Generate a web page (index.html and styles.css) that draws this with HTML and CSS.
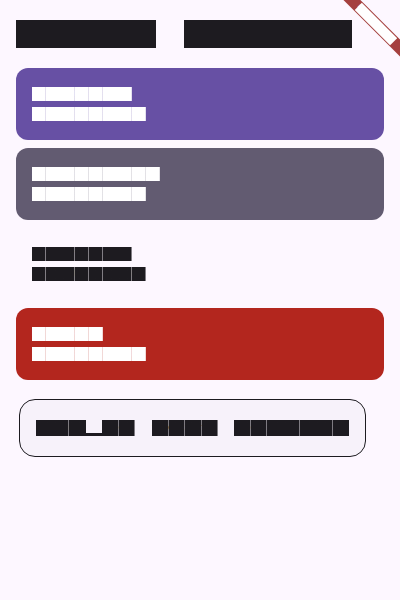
FILE: index.html
```html
<!DOCTYPE html>
<html lang="en">
<head>
<meta charset="utf-8">
<title>Color Scheme</title>
<link rel="stylesheet" href="styles.css">
</head>
<body>
<div class="screen">
  <main class="page">
    <h1 class="title"><span class="ah">Color</span><span class="ah">Scheme</span></h1>

    <section class="swatch swatch-primary">
      <div class="line"><span class="ah">Primary</span></div>
      <div class="line"><span class="ah">FF6750A4</span></div>
    </section>

    <section class="swatch swatch-secondary">
      <div class="line"><span class="ah">Secondary</span></div>
      <div class="line"><span class="ah">FF625B71</span></div>
    </section>

    <section class="swatch swatch-surface">
      <div class="line"><span class="ah">Surface</span></div>
      <div class="line"><span class="ah">FFFDF7FF</span></div>
    </section>

    <section class="swatch swatch-error">
      <div class="line"><span class="ah">Error</span></div>
      <div class="line"><span class="ah">FFB3261E</span></div>
    </section>

    <button class="btn" type="button">
      <span class="btn-label">
        <span class="word"><span class="ah">Sam</span><span class="ah desc">p</span><span class="ah">le</span></span>
        <span class="word"><span class="ah">text</span></span>
        <span class="word"><span class="ah">content</span></span>
      </span>
    </button>
  </main>

  <div class="banner-anchor">
    <div class="banner"><span class="ah">DEBUG</span></div>
  </div>
</div>
</body>
</html>
```

FILE: styles.css
```css
html, body {
  margin: 0;
  padding: 0;
  background: #FDF7FF;
  overflow: hidden;
}

.screen {
  position: relative;
  width: 400px;
  height: 600px;
  overflow: hidden;
  background: #FDF7FF;
  font-family: "Liberation Mono", monospace;
  --ink: #1D1B20;
  --bg: #FDF7FF;
}

/* Block-glyph text: each character occupies a solid em box (like a test font) */
.ah {
  --s: 14px;
  --ls: 0px;
  --adv: calc(var(--s) + var(--ls));
  --sep: var(--ink);
  display: inline-block;
  height: var(--s);
  line-height: var(--s);
  white-space: pre;
  font-family: "Liberation Mono", monospace;
  font-size: calc(var(--s) * 0.6);
  letter-spacing: calc(var(--s) * 0.64 + var(--ls));
  color: var(--ink);
  background: repeating-linear-gradient(to right,
    var(--ink) 0,
    var(--ink) calc(var(--adv) - 0.75px),
    var(--sep) calc(var(--adv) - 0.75px),
    var(--sep) var(--adv));
}

.ah.desc {
  color: transparent;
  background: linear-gradient(to bottom, transparent 80%, var(--ink) 80%);
}

.page {
  display: flex;
  flex-direction: column;
  gap: 8px;
  padding: 16px;
}

.title {
  margin: 0 0 8px 0;
  height: 36px;
  display: flex;
  align-items: center;
  gap: 28px;
  font-size: 28px;
  font-weight: normal;
  --ink: #1D1B20;
}

.title .ah {
  --s: 28px;
}

.swatch {
  border-radius: 12px;
  padding: 16px;
  display: flex;
  flex-direction: column;
}

.swatch .line {
  height: 20px;
  display: flex;
  align-items: center;
}

.swatch .ah {
  --s: 14px;
  --ls: 0.25px;
  --sep: color-mix(in srgb, var(--ink) 82%, var(--bg));
}

.swatch-surface .ah {
  --sep: color-mix(in srgb, var(--ink) 55%, var(--bg));
}

.swatch-primary {
  --bg: #6750A4;
  background: var(--bg);
  --ink: #FFFFFF;
}

.swatch-secondary {
  --bg: #625B71;
  background: var(--bg);
  --ink: #FFFFFF;
}

.swatch-surface {
  --bg: #FDF7FF;
  background: transparent;
  --ink: #1D1B20;
}

.swatch-error {
  --bg: #B3261E;
  background: var(--bg);
  --ink: #FFFFFF;
}

.btn {
  align-self: flex-start;
  margin: 11px 0 0 3px;
  padding: 16px;
  border: 1px solid #1D1B20;
  border-radius: 16px;
  background: #F7F2FA;
  font: inherit;
  cursor: pointer;
  --ink: #1D1B20;
  --bg: #F7F2FA;
}

.btn-label {
  display: flex;
  align-items: center;
  gap: 16.5px;
  height: 24px;
}

.word {
  display: flex;
}

.btn .ah {
  --s: 16px;
  --ls: 0.5px;
  --sep: color-mix(in srgb, var(--ink) 55%, var(--bg));
}

.banner-anchor {
  position: absolute;
  top: 0;
  right: 0;
  width: 0;
  height: 0;
}

.banner {
  position: absolute;
  left: -40px;
  top: 28px;
  width: 80px;
  height: 12px;
  background: #A5403F;
  transform-origin: 40px -28px;
  transform: rotate(45deg);
  display: flex;
  align-items: center;
  justify-content: center;
  --ink: #FFFFFF;
}

.banner .ah {
  --s: 10.2px;
}
```
